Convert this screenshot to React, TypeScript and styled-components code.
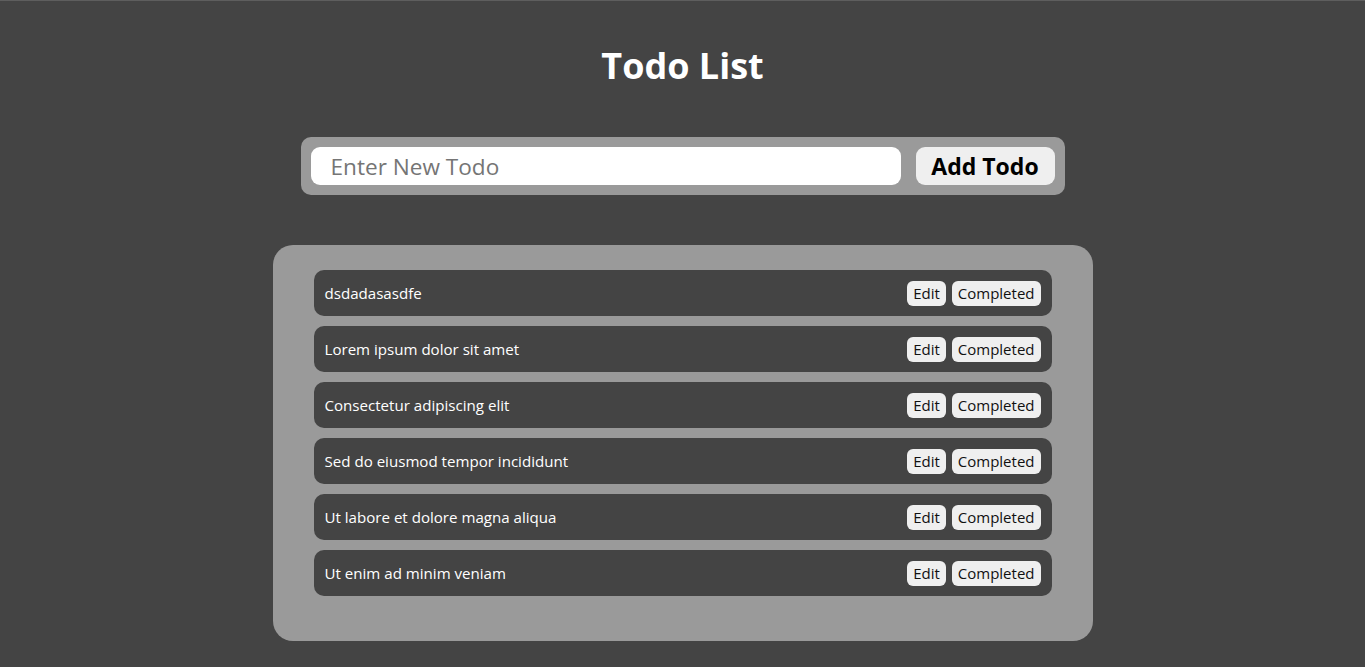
import React, { useState } from "react";
import styled, { createGlobalStyle } from "styled-components";

const Global = createGlobalStyle`
  html, body { margin: 0; padding: 0; background: #444444; }
  body { font-family: "Open Sans", "Noto Sans", sans-serif; border-top: 1px solid #5e5e5e; }
  * { box-sizing: border-box; }
`;

const Page = styled.div`
  display: flex;
  flex-direction: column;
  align-items: center;
  min-height: 666px;
`;

const Title = styled.h1`
  margin: 39px 0 0;
  color: #ffffff;
  font-size: 36px;
  font-weight: 700;
  line-height: 52px;
`;

const Form = styled.form`
  margin-top: 45px;
  width: 764px;
  height: 58px;
  padding: 10px;
  display: flex;
  gap: 15px;
  background: #9a9a9a;
  border-radius: 10px;
`;

const Input = styled.input`
  flex: 1;
  height: 38px;
  border: none;
  outline: none;
  border-radius: 9px;
  background: #ffffff;
  padding: 0 20px;
  font-family: inherit;
  font-size: 22.6px;
  color: #222;
  &::placeholder { color: #757575; }
`;

const AddButton = styled.button`
  width: 139px;
  height: 38px;
  border: none;
  border-radius: 9px;
  background: #efefef;
  color: #000;
  font-family: inherit;
  font-size: 23px;
  font-weight: 700;
  cursor: pointer;
`;

const List = styled.ul`
  list-style: none;
  margin: 50px 0 26px;
  width: 820px;
  padding: 25px 41px 35px;
  background: #9a9a9a;
  border-radius: 20px;
`;

const Row = styled.li`
  height: 46px;
  margin-bottom: 10px;
  padding: 0 11px 0 11px;
  display: flex;
  align-items: center;
  background: #444444;
  border-radius: 10px;
  color: #ffffff;
  font-size: 15.1px;
`;

const RowText = styled.span`
  flex: 1;
`;

const Actions = styled.div`
  display: flex;
  gap: 6px;
`;

const SmallButton = styled.button`
  height: 25px;
  padding: 0 6px;
  border: none;
  border-radius: 6px;
  background: #efefef;
  color: #111;
  font-family: inherit;
  font-size: 15px;
  line-height: 25px;
  cursor: pointer;
`;

const initial = [
  "dsdadasasdfe",
  "Lorem ipsum dolor sit amet",
  "Consectetur adipiscing elit",
  "Sed do eiusmod tempor incididunt",
  "Ut labore et dolore magna aliqua",
  "Ut enim ad minim veniam",
];

export default function App() {
  const [todos] = useState(initial);
  return (
    <>
      <Global />
      <Page>
        <Title>Todo List</Title>
        <Form onSubmit={(e) => e.preventDefault()}>
          <Input placeholder="Enter New Todo" />
          <AddButton type="submit">Add Todo</AddButton>
        </Form>
        <List>
          {todos.map((t) => (
            <Row key={t}>
              <RowText>{t}</RowText>
              <Actions>
                <SmallButton>Edit</SmallButton>
                <SmallButton>Completed</SmallButton>
              </Actions>
            </Row>
          ))}
        </List>
      </Page>
    </>
  );
}
